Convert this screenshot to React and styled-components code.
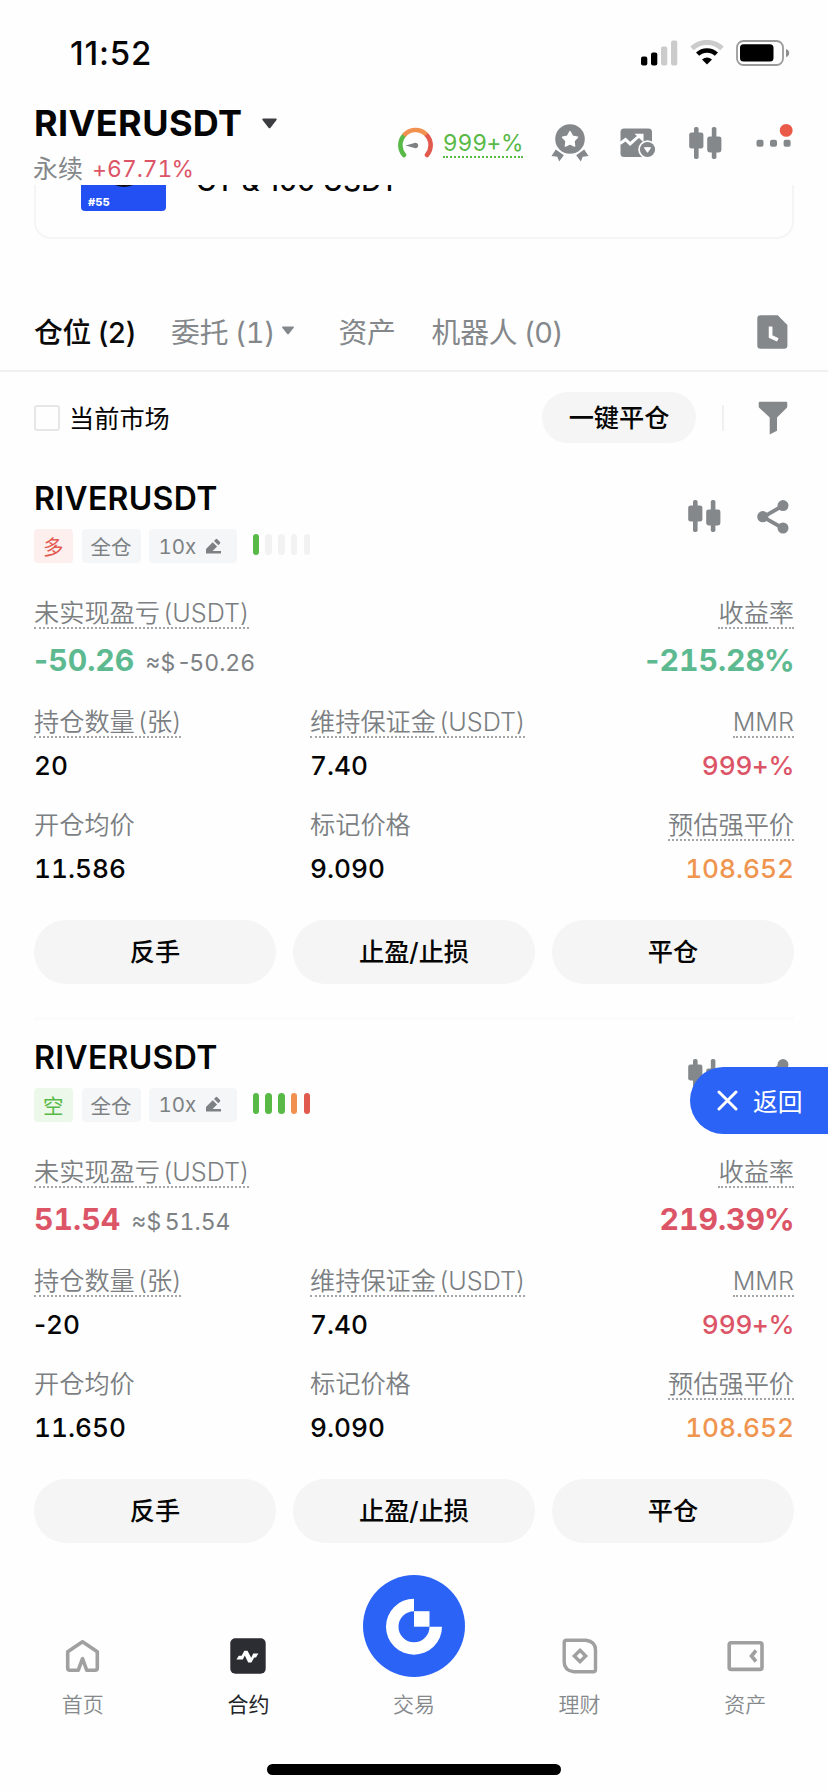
import React from "react";
import styled, { createGlobalStyle } from "styled-components";

const GlobalStyle = createGlobalStyle`
  * {
    box-sizing: border-box;
  }

  body {
    margin: 0;
    background: #fefefe;
    color: #050505;
    font-family: Inter, "Noto Sans CJK SC", sans-serif;
  }
`;

const gray = "#84888b";
const blue = "#2a63f6";
const colors = {
  up: "#dc5567",
  down: "#5dba90",
  warn: "#ef9550",
  green: "#58b947",
  orange: "#f0914f",
  red: "#e2594e",
  off: "#f2f2f3",
};

const Screen = styled.div`
  display: flex;
  flex-direction: column;
  width: 828px;
  height: 1792px;
  overflow: hidden;
  background: #fefefe;
`;

/* status bar + pair header */

const StatusBar = styled.div`
  display: flex;
  align-items: center;
  justify-content: space-between;
  height: 106px;
  padding: 0 38px 0 70px;
`;

const Clock = styled.span`
  font-size: 33px;
  font-weight: 500;
  letter-spacing: 0.8px;
`;

const StatusIcons = styled.div`
  display: flex;
  align-items: center;
  gap: 12px;
`;

const Header = styled.header`
  display: flex;
  justify-content: space-between;
  height: 79px;
  padding: 0 34px;
`;

const Pair = styled.div`
  display: flex;
  align-items: center;
  gap: 18px;
  height: 34px;
  font-size: 36px;
  font-weight: 700;
  line-height: 34px;
  letter-spacing: 0.4px;
`;

const PairSub = styled.div`
  display: flex;
  gap: 9px;
  margin: 13px 0 0 -1px;
  font-size: 25px;
  line-height: 32px;
  color: ${gray};
`;

const Change = styled.span`
  font-size: 22.8px;
  color: ${colors.up};
`;

const HeaderTools = styled.div`
  display: flex;
  align-items: center;
  height: 73px;
`;

const Risk = styled.div`
  display: flex;
  align-items: center;
  gap: 10px;
  margin-right: 28px;
`;

const RiskValue = styled.span`
  margin-top: 3px;
  border-bottom: 2px dotted ${colors.green};
  font-size: 22.9px;
  line-height: 25px;
  color: ${colors.green};
`;

const Tool = styled.span`
  display: flex;
  margin-left: ${(p) => p.$left || 0}px;
  margin-bottom: ${(p) => p.$lift || 0}px;
`;

/* banner scrolled under the header */

const Scroller = styled.main`
  display: flex;
  flex-direction: column;
  flex: 1;
  overflow: hidden;
`;

const Banner = styled.section`
  display: flex;
  flex-shrink: 0;
  height: 92px;
  margin: -38px 34px 0;
  padding: 0 0 26px 45px;
  border: 2px solid #f5f5f6;
  border-radius: 17px;
`;

const BannerArt = styled.div`
  display: flex;
  flex-direction: column;
  align-items: center;
  width: 85px;
  height: 62px;
  border-radius: 4px;
  background: #2250f2;
`;

const BannerDisc = styled.span`
  flex-shrink: 0;
  width: 40px;
  height: 38px;
  border-radius: 50%;
  background: #0b0d12;
`;

const BannerNumber = styled.span`
  align-self: flex-start;
  margin: 7px 0 0 7px;
  font-size: 11px;
  font-weight: 800;
  line-height: 17px;
  color: #fff;
`;

const BannerText = styled.p`
  margin: 15px 0 0 30px;
  font-size: 27.4px;
  font-weight: 500;
  line-height: 34px;
  letter-spacing: 0.3px;
`;

/* tabs and filters */

const Tabs = styled.nav`
  display: flex;
  align-items: center;
  flex-shrink: 0;
  height: 80px;
  margin-top: 53px;
  padding: 0 40px 1px 34px;
  border-bottom: 2px solid #f0f0f1;
`;

const Tab = styled.span`
  display: flex;
  align-items: center;
  margin-right: ${(p) => p.$right}px;
  font-size: 28.8px;
  font-weight: ${(p) => (p.$active ? 500 : 400)};
  letter-spacing: -0.2px;
  word-spacing: -1px;
  color: ${(p) => (p.$active ? "#0a0a0a" : gray)};

  svg {
    margin-left: 6px;
  }
`;

const Push = styled.span`
  display: flex;
  margin: 2px 0 0 auto;
`;

const Filters = styled.div`
  display: flex;
  align-items: center;
  flex-shrink: 0;
  height: 91px;
  padding: 0 40px 0 34px;
`;

const Checkbox = styled.span`
  width: 26px;
  height: 26px;
  margin-right: 9px;
  border: 2px solid #e6e7e8;
  border-radius: 3px;
`;

const FilterLabel = styled.span`
  padding-bottom: 2px;
  font-size: 25.2px;
`;

const CloseAll = styled.button`
  width: 154px;
  height: 51px;
  margin-left: auto;
  padding: 0 0 3px;
  border: 0;
  border-radius: 26px;
  background: #f5f5f5;
  color: #050505;
  font: 500 25.2px Inter, "Noto Sans CJK SC", sans-serif;
`;

const Separator = styled.span`
  width: 2px;
  height: 26px;
  margin: 0 34px 0 26px;
  background: #f0f0f1;
`;

/* position card */

const Position = styled.article`
  flex-shrink: 0;
  height: 558.5px;
  padding: 20px 34px 0;
`;

const PositionHead = styled.div`
  display: flex;
  justify-content: space-between;
  height: 80px;
`;

const Symbol = styled.h2`
  margin: 0 0 14px;
  font-size: 32px;
  font-weight: 600;
  line-height: 32px;
  letter-spacing: 0.3px;
`;

const Tags = styled.div`
  display: flex;
  align-items: center;
`;

const tones = {
  long: { bg: "#fcefee", fg: colors.red },
  short: { bg: "#ebf8ea", fg: colors.green },
  plain: { bg: "#f5f6f7", fg: "#7d8184" },
};

const Tag = styled.span`
  display: flex;
  align-items: center;
  height: 34px;
  margin-right: ${(p) => p.$right ?? 9}px;
  padding: 0 9px;
  border-radius: 4px;
  background: ${(p) => tones[p.$tone].bg};
  color: ${(p) => tones[p.$tone].fg};
  font-size: 20.5px;
`;

const Leverage = styled(Tag)`
  justify-content: space-between;
  width: 88px;
  padding: 0 15px 0 10px;
  font-feature-settings: "tnum";
`;

const Levels = styled.span`
  display: flex;
  gap: 6.3px;
  margin-top: -3px;
`;

const Level = styled.i`
  width: 6.5px;
  height: 21px;
  border-radius: 3.5px;
  background: ${(p) => colors[p.$color]};
`;

const HeadIcons = styled.div`
  display: flex;
  gap: 36px;
  margin: 17px 5px 0 0;
`;

const Row = styled.div`
  display: grid;
  grid-template-columns: ${(p) => (p.$wide ? "1fr auto" : "276px 1fr auto")};
  margin-top: ${(p) => p.$top}px;
`;

const Cell = styled.div`
  display: flex;
  flex-direction: column;
  align-items: ${(p) => (p.$end ? "flex-end" : "flex-start")};
`;

const Label = styled.span`
  border-bottom: 2px dotted ${(p) => (p.$plain ? "transparent" : "#a3a6a8")};
  font-size: 25.2px;
  font-weight: 350;
  line-height: 28px;
  word-spacing: -3.5px;
  color: #7b7f82;
`;

const Value = styled.span`
  margin-top: 13px;
  font-size: 26.2px;
  font-weight: 500;
  line-height: 30px;
  color: ${(p) => p.$color || "#050505"};
`;

const Profit = styled.div`
  display: flex;
  align-items: baseline;
  gap: 11px;
  height: 36px;
  margin-top: 13px;
  font-size: 30.2px;
  font-weight: 700;
  line-height: 36px;
  color: ${(p) => p.$color};
`;

const Approx = styled.span`
  font-size: 23px;
  font-weight: 400;
  word-spacing: -3px;
  color: #7d8184;
`;

const Digits = styled.span`
  font-feature-settings: "tnum";
`;

const Tail = styled.span`
  margin-left: -0.04em;
  letter-spacing: -0.02em;
`;

const Actions = styled.div`
  display: grid;
  grid-template-columns: repeat(3, 1fr);
  gap: 17px;
  margin-top: 36px;
`;

const Action = styled.button`
  height: 64px;
  padding: 0 0 4px;
  border: 0;
  border-radius: 32px;
  background: #f5f5f5;
  color: #050505;
  font: 500 25.2px Inter, "Noto Sans CJK SC", sans-serif;
`;

const Divider = styled.hr`
  height: 3px;
  margin: 33px 0 0;
  border: 0;
  background: #fbfbfb;
`;

const BackButton = styled.button`
  position: absolute;
  left: 690px;
  top: 1067px;
  display: flex;
  align-items: center;
  gap: 15px;
  width: 138px;
  height: 67px;
  padding: 0 0 1px 27px;
  border: 0;
  border-radius: 34px 0 0 34px;
  background: ${blue};
  color: #fff;
  font: 400 24.8px Inter, "Noto Sans CJK SC", sans-serif;
`;

/* bottom navigation */

const BottomNav = styled.nav`
  display: grid;
  grid-template-columns: repeat(5, 1fr);
  height: 130px;
  background: #fefefe;
`;

const NavItem = styled.div`
  display: flex;
  flex-direction: column;
  align-items: center;
  font-size: 21px;
  font-weight: ${(p) => (p.$active ? 400 : 350)};
  line-height: 28px;
  color: ${(p) => (p.$active ? "#222427" : "#85898c")};
`;

const NavIcon = styled.span`
  display: flex;
  align-items: flex-end;
  height: ${(p) => (p.$big ? 63 : 60)}px;
  margin-bottom: ${(p) => (p.$big ? 14 : 17)}px;

  svg {
    flex-shrink: 0;
  }
`;

const HomeBar = styled.div`
  width: 294px;
  height: 11px;
  margin: 20px auto 17px;
  border-radius: 6px;
  background: #000;
`;

const Caret = ({ w, h, color }) => (
  <svg width={w} height={h} viewBox="0 0 16 11">
    <path d="M1.6 0.6h12.8q1.4.3.6 1.5l-6 7.6q-1 1-2 0L1 2.1Q.2.9 1.6.6z" fill={color} />
  </svg>
);

const Signal = () => (
  <svg width="37" height="26" viewBox="0 0 37 26">
    <rect x="0" y="16.5" width="6.3" height="9" rx="2" />
    <rect x="10" y="12.5" width="6.3" height="13" rx="2" />
    <rect x="20" y="6.5" width="6.3" height="19" rx="2" fill="#cbcbcb" />
    <rect x="30" y="0.5" width="6.3" height="25" rx="2" fill="#cbcbcb" />
  </svg>
);

const Wifi = () => (
  <svg width="34" height="26" viewBox="0 0 34 26" fill="none">
    <path d="M2 8.3a22 22 0 0 1 30 0" stroke="#cbcbcb" strokeWidth="5" />
    <path d="M7.6 14.2a13.6 13.6 0 0 1 18.8 0" stroke="#000" strokeWidth="4.6" />
    <path d="M12 19.6q5-4.2 10 0l-5 5z" fill="#000" />
  </svg>
);

const Battery = () => (
  <svg width="54" height="26" viewBox="0 0 54 26">
    <rect x="1" y="1" width="46" height="24" rx="6.5" fill="none" stroke="#9b9b9b" strokeWidth="1.8" />
    <rect x="4" y="4.2" width="33.5" height="17.4" rx="3.6" />
    <path d="M50 9q3.2 1 3.2 4t-3.2 4z" fill="#8f8f8f" />
  </svg>
);

const Gauge = () => (
  <svg width="35" height="31" viewBox="0 0 35 31" fill="none" strokeWidth="4.6">
    <path d="M6 28A15 15 0 0 1 6.4 8" stroke={colors.green} strokeLinecap="round" />
    <path d="M29 28A15 15 0 0 0 28.6 8" stroke={colors.red} strokeLinecap="round" />
    <path d="M5.8 8.6A15 15 0 0 1 28.4 7.8" stroke={colors.orange} />
    <path d="M7.5 18.6l9-2.6a2.7 2.7 0 1 1 0 5z" fill="#7d8184" />
  </svg>
);

const Medal = () => (
  <svg width="38" height="38" viewBox="0 0 38 38" fill={gray}>
    <circle cx="19" cy="15" r="14.8" />
    <path
      d="M19 7.6l2.5 4.6 5 1-3.5 3.7.6 5.2-4.6-2.3-4.6 2.3.6-5.2-3.5-3.7 5-1z"
      fill="#fff"
      stroke="#fff"
      strokeWidth="1.4"
      strokeLinejoin="round"
    />
    <path d="M4.8 25.4l8 5.8-4.6 6.4-1.9-4.9-5.8-.6z" />
    <path d="M33.2 25.4l-8 5.8 4.6 6.4 1.9-4.9 5.8-.6z" />
  </svg>
);

const ChartCard = () => (
  <svg width="36" height="30" viewBox="0 0 36 30">
    <rect x="0.5" y="0.5" width="31.5" height="28.5" rx="3.5" fill={gray} />
    <path d="M0 15.5l5.5-4 4.6 4.4L19 8" fill="none" stroke="#fff" strokeWidth="3" />
    <path d="M14.5 5.8h9v8.4z" fill="#fff" />
    <circle cx="27.5" cy="21.5" r="9.3" fill="#fff" />
    <circle cx="27.5" cy="21.5" r="7.6" fill={gray} />
    <path d="M24.4 19.7h6.2l-3.1 4.6z" fill="#fff" stroke="#fff" strokeLinejoin="round" />
  </svg>
);

const Candles = () => (
  <svg width="33" height="32" viewBox="0 0 33 32" fill={gray}>
    <rect x="5" y="0" width="4.6" height="32" rx="1.8" />
    <rect x="0.2" y="5.4" width="14.2" height="16.2" rx="2.4" />
    <rect x="22.8" y="0" width="4.6" height="32" rx="1.8" />
    <rect x="18.2" y="9.4" width="14.2" height="16" rx="2.4" />
  </svg>
);

const More = () => (
  <svg width="38" height="34" viewBox="0 0 38 34" fill={gray}>
    <rect x="0.5" y="15.8" width="7" height="7" rx="2" />
    <rect x="14" y="15.8" width="7" height="7" rx="2" />
    <rect x="27.6" y="15.8" width="7" height="7" rx="2" />
    <circle cx="30.2" cy="6.4" r="6.4" fill="#ea5a49" />
  </svg>
);

const RecordIcon = () => (
  <svg width="31" height="34" viewBox="0 0 31 34">
    <path d="M3.5.3h17.2L30.4 10v20.5a3.2 3.2 0 0 1-3.2 3.2H3.5A3.2 3.2 0 0 1 .3 30.5V3.5A3.2 3.2 0 0 1 3.5.3z" fill={gray} />
    <path d="M13.6 11.5v10l7.2 3.4" fill="none" stroke="#fff" strokeWidth="3.7" />
  </svg>
);

const Funnel = () => (
  <svg width="30" height="34" viewBox="0 0 30 34">
    <path
      d="M2 .7h26q1.3 0 1.3 1.3v3.2q0 1-.7 1.7L19 16.6v13.2l-7.3 3.7V16.6L1.5 6.9Q.7 6.2.7 5.2V2Q.7.7 2 .7z"
      fill={gray}
    />
  </svg>
);

const Pencil = () => (
  <svg width="17" height="17" viewBox="0 0 17 17" fill="#7d8184">
    <path d="M1 15.6V11l6.7-6.8 4.4 4.4L7.6 13H16v2.6z" />
    <path d="M9 3l1.7-1.8q.8-.8 1.6 0L15 3.9q.8.8 0 1.6l-1.7 1.8z" />
  </svg>
);

const Share = () => (
  <svg width="32" height="34" viewBox="0 0 32 34" fill={gray}>
    <path d="M25.5 6L6 17l19.5 11" fill="none" stroke={gray} strokeWidth="3.8" />
    <circle cx="26" cy="5.6" r="5.5" />
    <circle cx="5.8" cy="16.7" r="5.6" />
    <circle cx="26" cy="28" r="5.5" />
  </svg>
);

const Cross = () => (
  <svg width="21" height="21" viewBox="0 0 21 21" stroke="#fff" strokeWidth="3" strokeLinecap="round">
    <path d="M2 2l17 17M19 2L2 19" />
  </svg>
);

const navGray = "#a0a0a0";

const Home = () => (
  <svg width="35" height="36" viewBox="0 0 35 36" fill="none" stroke={navGray} strokeWidth="3.6" strokeLinejoin="round">
    <path d="M17.5 3.8L32.3 13.7V30q0 2.2-2.2 2.2H21.7L17.5 20.7L13.3 32.2H4.9q-2.2 0-2.2-2.2V13.7z" />
  </svg>
);

const Futures = () => (
  <svg width="36" height="36" viewBox="0 0 36 36">
    <rect x="0.3" y="0.3" width="35.4" height="35.4" rx="5" fill="#2b2d32" />
    <path
      d="M6.4 21.6L8.8 17.8h2.8l2.7-5h3.2l3.7 7 2-4.2h5.2L26 19.4h-1.8l-2.8 5h-3.2l-3.4-6.8-2 4z"
      fill="#fff"
    />
  </svg>
);

const Trade = () => (
  <svg width="102" height="102" viewBox="0 0 102 102">
    <circle cx="51" cy="51" r="51" fill={blue} />
    <path d="M51 23.7A28 28 0 1 0 79 51.7H66.5A15.5 15.5 0 1 1 51 36.2z" fill="#fff" />
    <rect x="51" y="36.2" width="15.5" height="15.5" fill="#fff" />
  </svg>
);

const Earn = () => (
  <svg width="36" height="36" viewBox="0 0 36 36" fill="none" stroke={navGray} strokeWidth="3.4">
    <path d="M4.5 2.2H24Q33.5 3.5 33.5 12V31.5Q33.5 33.8 31.2 33.8H12Q2.2 32.5 2.2 24V4.5Q2.2 2.2 4.5 2.2z" />
    <path d="M18 12.3L23.7 18L18 23.7L12.3 18z" />
  </svg>
);

const Wallet = () => (
  <svg width="37" height="36" viewBox="0 0 37 36" fill="none" stroke={navGray} strokeWidth="3.6">
    <rect x="2.2" y="4.8" width="32.8" height="26.6" rx="2" />
    <path d="M29 12.5L24.5 18L29 23.5" />
  </svg>
);

// tabular digits, proportional signs
const Num = ({ children }) => {
  const [, sign, digits, tail] = children.match(/^([^\d]*)([\d.]+)(.*)$/);
  return (
    <span>
      {sign}
      <Digits>{digits}</Digits>
      {tail && <Tail>{tail}</Tail>}
    </span>
  );
};

const PositionCard = ({ item }) => (
  <Position>
    <PositionHead>
      <div>
        <Symbol>RIVERUSDT</Symbol>
        <Tags>
          <Tag $tone={item.tone}>{item.side}</Tag>
          <Tag $tone="plain" $right={8}>全仓</Tag>
          <Leverage $tone="plain" $right={16}>
            10x
            <Pencil />
          </Leverage>
          <Levels>
            {item.levels.map((c, i) => (
              <Level key={i} $color={c} />
            ))}
          </Levels>
        </Tags>
      </div>
      <HeadIcons>
        <Candles />
        <Share />
      </HeadIcons>
    </PositionHead>

    <Row $wide $top={36}>
      <Cell>
        <Label>未实现盈亏 (USDT)</Label>
        <Profit $color={item.color}>
          <Num>{item.pnl}</Num>
          <Approx>
            <Num>{`≈$ ${item.pnl}`}</Num>
          </Approx>
        </Profit>
      </Cell>
      <Cell $end>
        <Label>收益率</Label>
        <Profit $color={item.color}>
          <Num>{item.roe}</Num>
        </Profit>
      </Cell>
    </Row>

    <Row $top={30}>
      <Cell>
        <Label>持仓数量 (张)</Label>
        <Value>
          <Num>{item.size}</Num>
        </Value>
      </Cell>
      <Cell>
        <Label>维持保证金 (USDT)</Label>
        <Value>
          <Num>7.40</Num>
        </Value>
      </Cell>
      <Cell $end>
        <Label>MMR</Label>
        <Value $color={colors.up}>
          <Num>999+%</Num>
        </Value>
      </Cell>
    </Row>

    <Row $top={30}>
      <Cell>
        <Label $plain>开仓均价</Label>
        <Value>
          <Num>{item.entry}</Num>
        </Value>
      </Cell>
      <Cell>
        <Label $plain>标记价格</Label>
        <Value>
          <Num>9.090</Num>
        </Value>
      </Cell>
      <Cell $end>
        <Label>预估强平价</Label>
        <Value $color={colors.warn}>
          <Num>108.652</Num>
        </Value>
      </Cell>
    </Row>

    <Actions>
      <Action>反手</Action>
      <Action>止盈/止损</Action>
      <Action>平仓</Action>
    </Actions>
    {item.divider && <Divider />}
  </Position>
);

const positions = [
  {
    side: "多",
    tone: "long",
    levels: ["green", "off", "off", "off", "off"],
    color: colors.down,
    pnl: "-50.26",
    roe: "-215.28%",
    size: "20",
    entry: "11.586",
    divider: true,
  },
  {
    side: "空",
    tone: "short",
    levels: ["green", "green", "green", "orange", "red"],
    color: colors.up,
    pnl: "51.54",
    roe: "219.39%",
    size: "-20",
    entry: "11.650",
  },
];

const navItems = [
  { label: "首页", icon: <Home /> },
  { label: "合约", icon: <Futures />, active: true },
  { label: "交易", icon: <Trade />, big: true },
  { label: "理财", icon: <Earn /> },
  { label: "资产", icon: <Wallet /> },
];

const App = () => {
  return (
    <>
      <GlobalStyle />
      <Screen>
        <StatusBar>
          <Clock>11:52</Clock>
          <StatusIcons>
            <Signal />
            <Wifi />
            <Battery />
          </StatusIcons>
        </StatusBar>

        <Header>
          <div>
            <Pair>
              RIVERUSDT
              <Caret w={17} h={11} color="#3b3d40" />
            </Pair>
            <PairSub>
              <span>永续</span>
              <Change>
                <Num>+67.71%</Num>
              </Change>
            </PairSub>
          </div>
          <HeaderTools>
            <Risk>
              <Gauge />
              <RiskValue>
                <Num>999+%</Num>
              </RiskValue>
            </Risk>
            <Tool>
              <Medal />
            </Tool>
            <Tool $left={31}>
              <ChartCard />
            </Tool>
            <Tool $left={33}>
              <Candles />
            </Tool>
            <Tool $left={34} $lift={3}>
              <More />
            </Tool>
          </HeaderTools>
        </Header>

        <Scroller>
          <Banner>
            <BannerArt>
              <BannerDisc />
              <BannerNumber>#55</BannerNumber>
            </BannerArt>
            <BannerText>GT &amp; 100 USDT</BannerText>
          </Banner>

          <Tabs>
            <Tab $active $right={35}>仓位 (2)</Tab>
            <Tab $right={43}>
              <Digits>委托 (1)</Digits>
              <Caret w={14} h={9} color={gray} />
            </Tab>
            <Tab $right={36}>资产</Tab>
            <Tab $right={0}>机器人 (0)</Tab>
            <Push>
              <RecordIcon />
            </Push>
          </Tabs>

          <Filters>
            <Checkbox />
            <FilterLabel>当前市场</FilterLabel>
            <CloseAll>一键平仓</CloseAll>
            <Separator />
            <Funnel />
          </Filters>

          {positions.map((item) => (
            <PositionCard key={item.entry} item={item} />
          ))}
        </Scroller>

        <BottomNav>
          {navItems.map((n) => (
            <NavItem key={n.label} $active={n.active}>
              <NavIcon $big={n.big}>{n.icon}</NavIcon>
              {n.label}
            </NavItem>
          ))}
        </BottomNav>
        <HomeBar />
        <BackButton>
          <Cross />
          返回
        </BackButton>
      </Screen>
    </>
  );
};

export default App;
